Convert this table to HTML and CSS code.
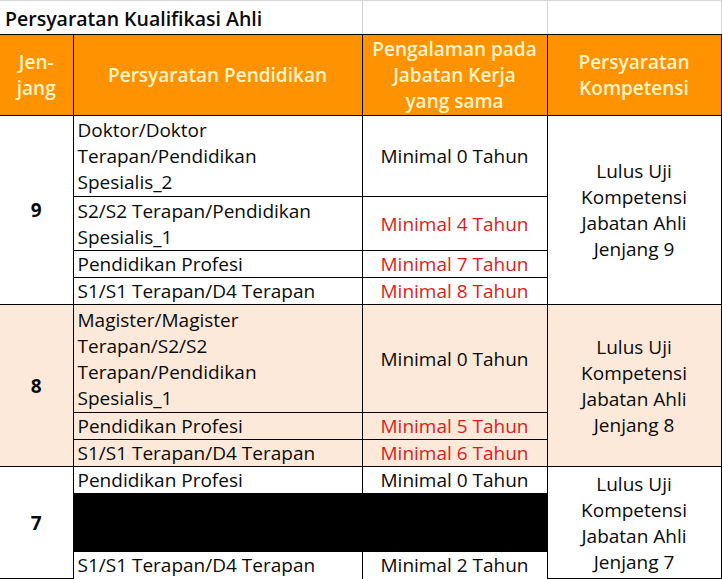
FILE: index.html
```
<!DOCTYPE html>
<html lang="id">
<head>
<meta charset="utf-8">
<title>Persyaratan Kualifikasi Ahli</title>
<link rel="stylesheet" href="styles.css">
</head>
<body>
<table class="sheet">
  <colgroup>
    <col class="c1"><col class="c2"><col class="c3"><col class="c4">
  </colgroup>
  <tr class="title-row">
    <td class="title" colspan="2">Persyaratan Kualifikasi Ahli</td>
    <td class="blank"></td>
    <td class="blank"></td>
  </tr>
  <tr class="head h81">
    <th>Jen-<br>jang</th>
    <th>Persyaratan Pendidikan</th>
    <th>Pengalaman pada<br>Jabatan Kerja<br>yang sama</th>
    <th>Persyaratan<br>Kompetensi</th>
  </tr>

  <tr class="h81">
    <td class="lvl" rowspan="4">9</td>
    <td class="edu">Doktor/Doktor<br>Terapan/Pendidikan<br>Spesialis_2</td>
    <td class="exp">Minimal 0 Tahun</td>
    <td class="komp" rowspan="4">Lulus Uji<br>Kompetensi<br>Jabatan Ahli<br>Jenjang 9</td>
  </tr>
  <tr class="h54">
    <td class="edu">S2/S2 Terapan/Pendidikan<br>Spesialis_1</td>
    <td class="exp red">Minimal 4 Tahun</td>
  </tr>
  <tr class="h27">
    <td class="edu">Pendidikan Profesi</td>
    <td class="exp red">Minimal 7 Tahun</td>
  </tr>
  <tr class="h27">
    <td class="edu">S1/S1 Terapan/D4 Terapan</td>
    <td class="exp red">Minimal 8 Tahun</td>
  </tr>

  <tr class="h108 peach">
    <td class="lvl" rowspan="3">8</td>
    <td class="edu">Magister/Magister<br>Terapan/S2/S2<br>Terapan/Pendidikan<br>Spesialis_1</td>
    <td class="exp">Minimal 0 Tahun</td>
    <td class="komp" rowspan="3">Lulus Uji<br>Kompetensi<br>Jabatan Ahli<br>Jenjang 8</td>
  </tr>
  <tr class="h27 peach">
    <td class="edu">Pendidikan Profesi</td>
    <td class="exp red">Minimal 5 Tahun</td>
  </tr>
  <tr class="h27 peach">
    <td class="edu">S1/S1 Terapan/D4 Terapan</td>
    <td class="exp red">Minimal 6 Tahun</td>
  </tr>

  <tr class="h27">
    <td class="lvl" rowspan="3">7</td>
    <td class="edu noline">Pendidikan Profesi</td>
    <td class="exp noline">Minimal 0 Tahun</td>
    <td class="komp" rowspan="3">Lulus Uji<br>Kompetensi<br>Jabatan Ahli<br>Jenjang 7</td>
  </tr>
  <tr class="h58">
    <td class="redact" colspan="2"></td>
  </tr>
  <tr class="h27">
    <td class="edu noline">S1/S1 Terapan/D4 Terapan</td>
    <td class="exp noline">Minimal 2 Tahun</td>
  </tr>
</table>
</body>
</html>
```

FILE: styles.css
```
html, body {
  margin: 0;
  padding: 0;
  background: #ffffff;
}

.sheet {
  border-collapse: collapse;
  table-layout: fixed;
  width: 721px;
  font-family: "Open Sans", "DejaVu Sans", sans-serif;
  font-size: 19px;
  line-height: 26px;
  color: #0a0a0a;
}

.c1 { width: 73px; }
.c2 { width: 289px; }
.c3 { width: 185px; }
.c4 { width: 174px; }

.sheet td, .sheet th {
  border: 1px solid #000;
  padding: 0;
  vertical-align: middle;
  overflow: hidden;
  white-space: nowrap;
}

.title-row { height: 34px; }
.sheet .title {
  border: none;
  border-top: 1px solid #d6d6d6;
  border-bottom: 1px solid #000;
  font-weight: 600;
  font-size: 19.5px;
  padding-left: 5px;
  padding-top: 3px;
  color: #0a0a0a;
}
.sheet .blank {
  border-top: 1px solid #d6d6d6;
  border-left: 1px solid #d6d6d6;
  border-right: 1px solid #d6d6d6;
  border-bottom: 1px solid #000;
}

.head th {
  background: #ff9200;
  color: #fff4c6;
  font-weight: 600;
  text-align: center;
}

.sheet .lvl {
  font-weight: 700;
  text-align: center;
  border-left: none;
}
.sheet .edu { padding-left: 4px; text-align: left; }
.exp { text-align: center; }
.komp { text-align: center; }
.sheet .red { color: #dc1c1c; }

.peach td { background: #fde9d9; }

.sheet .noline { border-top: none; border-bottom: none; }
.sheet .redact { background: #000; border-color: #000; }

.h27 { height: 27px; }
.h54 { height: 54px; }
.h58 { height: 58px; }
.h81 { height: 81px; }
.h108 { height: 108px; }

.head th:first-child { border-left: none; }
```
